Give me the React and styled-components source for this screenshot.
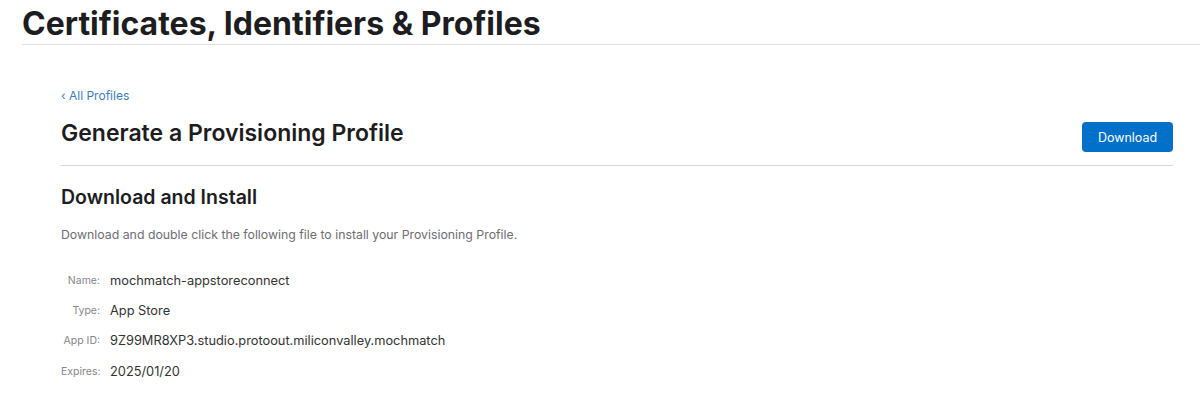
import React from 'react';
import styled, { createGlobalStyle } from 'styled-components';

const Global = createGlobalStyle`
	body {
		margin: 0;
		background: #fff;
		font-family: Inter, "Liberation Sans", sans-serif;
		color: #1d1d1f;
	}
`;

const Page = styled.div`
	width: 1200px;
	height: 411px;
	overflow: hidden;
`;

const TopBar = styled.header`
	margin-left: 22px;
	height: 44px;
	border-bottom: 1px solid #e0e0e0;
	h1 {
		margin: 0;
		padding-top: 5px;
		font-size: 32px;
		font-weight: 700;
		line-height: 38px;
	}
`;

const Main = styled.main`
	margin: 0 27px 0 61px;
	padding-top: 43px;
`;

const Back = styled.a`
	display: block;
	font-size: 12px;
	color: #3a7ebf;
	text-decoration: none;
	line-height: 16px;
`;

const TitleRow = styled.div`
	display: flex;
	align-items: flex-start;
	justify-content: space-between;
	height: 44px;
	margin-top: 14px;
	padding-bottom: 3px;
	border-bottom: 1px solid #d6d6d6;
	h2 {
		margin: 0;
		font-size: 23px;
		font-weight: 600;
		line-height: 30px;
	}
`;

const Button = styled.button`
	background: #0070c9;
	color: #fff;
	border: 0;
	border-radius: 4px;
	width: 91px;
	height: 30px;
	margin-top: 4px;
	font: 400 12.5px Inter, "Liberation Sans", sans-serif;
`;

const Section = styled.section`
	h3 {
		margin: 19px 0 0;
		font-size: 19.5px;
		font-weight: 600;
		line-height: 24px;
	}
	p {
		margin: 18px 0 0;
		font-size: 12.3px;
		color: #6e6e73;
		line-height: 16px;
	}
`;

const Details = styled.dl`
	display: grid;
	grid-template-columns: 39px auto;
	grid-auto-rows: 30.4px;
	align-items: center;
	column-gap: 10px;
	margin: 22px 0 0;
	dt {
		text-align: right;
		font-size: 10.5px;
		color: #86868b;
	}
	dd {
		margin: 0;
		font-size: 12.8px;
		color: #333;
	}
`;

const fields = [
	['Name:', 'mochmatch-appstoreconnect'],
	['Type:', 'App Store'],
	['App ID:', '9Z99MR8XP3.studio.protoout.miliconvalley.mochmatch'],
	['Expires:', '2025/01/20'],
];

const App = () => (
	<Page>
		<Global />
		<TopBar>
			<h1>Certificates, Identifiers &amp; Profiles</h1>
		</TopBar>
		<Main>
			<Back href="#">‹ All Profiles</Back>
			<TitleRow>
				<h2>Generate a Provisioning Profile</h2>
				<Button>Download</Button>
			</TitleRow>
			<Section>
				<h3>Download and Install</h3>
				<p>Download and double click the following file to install your Provisioning Profile.</p>
				<Details>
					{fields.map(([k, v]) => (
						<React.Fragment key={k}>
							<dt>{k}</dt>
							<dd>{v}</dd>
						</React.Fragment>
					))}
				</Details>
			</Section>
		</Main>
	</Page>
);

export default App;
